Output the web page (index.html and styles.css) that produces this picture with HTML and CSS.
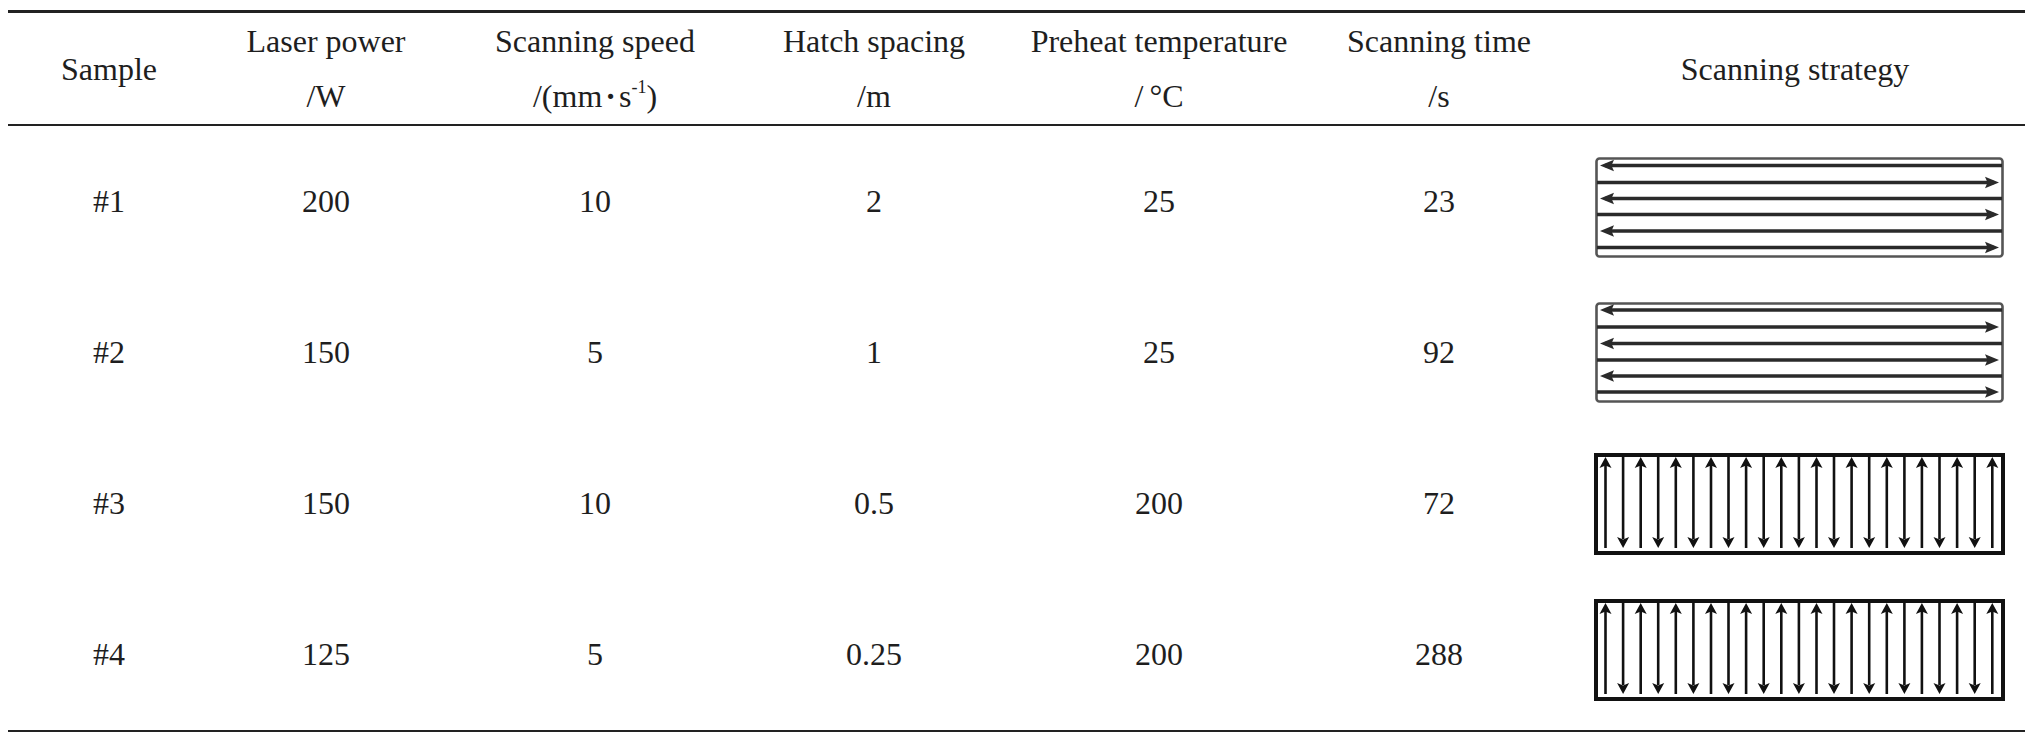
FILE: index.html
```html
<!DOCTYPE html>
<html lang="en">
<head>
<meta charset="utf-8">
<title>Scanning parameters</title>
<link rel="stylesheet" href="styles.css">
</head>
<body>
<div class="table">
  <div class="row head">
    <div class="cell">Sample</div>
    <div class="cell">Laser power<br>/W</div>
    <div class="cell">Scanning speed<br>/(mm<span class="dot">·</span>s<sup>-1</sup>)</div>
    <div class="cell">Hatch spacing<br>/m</div>
    <div class="cell">Preheat temperature<br><span class="deg">/ °C</span></div>
    <div class="cell time">Scanning time<br>/s</div>
    <div class="cell strat-head">Scanning strategy</div>
  </div>

  <div class="row body">
    <div class="cell">#1</div>
    <div class="cell">200</div>
    <div class="cell">10</div>
    <div class="cell">2</div>
    <div class="cell">25</div>
    <div class="cell time">23</div>
    <div class="cell strat shift-down">
      <svg class="hbox" width="409" height="101" viewBox="0 0 409 101">
        <defs>
          <g id="hl"><line x1="10" y1="0" x2="407" y2="0"/><path d="M5,0 L19,-5.8 L16.5,0 L19,5.8 Z"/></g>
          <g id="hr"><line x1="2" y1="0" x2="399" y2="0"/><path d="M404,0 L390,-5.8 L392.5,0 L390,5.8 Z"/></g>
        </defs>
        <rect class="frame" x="1.5" y="1.5" width="406" height="98" rx="3"/>
        <use href="#hl" y="8.5"/>
        <use href="#hr" y="25.5"/>
        <use href="#hl" y="41.5"/>
        <use href="#hr" y="57.5"/>
        <use href="#hl" y="74"/>
        <use href="#hr" y="90.5"/>
      </svg>
    </div>
  </div>

  <div class="row body">
    <div class="cell">#2</div>
    <div class="cell">150</div>
    <div class="cell">5</div>
    <div class="cell">1</div>
    <div class="cell">25</div>
    <div class="cell time">92</div>
    <div class="cell strat">
      <svg class="hbox" width="409" height="101" viewBox="0 0 409 101">
        <rect class="frame" x="1.5" y="1.5" width="406" height="98" rx="3"/>
        <use href="#hl" y="8"/>
        <use href="#hr" y="25"/>
        <use href="#hl" y="41.5"/>
        <use href="#hr" y="58"/>
        <use href="#hl" y="74"/>
        <use href="#hr" y="90"/>
      </svg>
    </div>
  </div>

  <div class="row body">
    <div class="cell">#3</div>
    <div class="cell">150</div>
    <div class="cell">10</div>
    <div class="cell">0.5</div>
    <div class="cell">200</div>
    <div class="cell time">72</div>
    <div class="cell strat">
      <svg class="vbox" width="411" height="102" viewBox="0 0 411 102">
        <defs>
          <g id="up"><line x1="0" y1="12" x2="0" y2="95"/><path d="M0,4 L-6,15 L0,12.5 L6,15 Z"/></g>
          <g id="dn"><line x1="0" y1="4" x2="0" y2="86"/><path d="M0,95 L-6,84 L0,86.5 L6,84 Z"/></g>
        </defs>
        <rect class="frame" x="2" y="2" width="407" height="98"/>
        <use href="#up" x="11.5"/><use href="#dn" x="29.1"/>
        <use href="#up" x="46.7"/><use href="#dn" x="64.2"/>
        <use href="#up" x="81.8"/><use href="#dn" x="99.4"/>
        <use href="#up" x="117"/><use href="#dn" x="134.5"/>
        <use href="#up" x="152.1"/><use href="#dn" x="169.7"/>
        <use href="#up" x="187.3"/><use href="#dn" x="204.9"/>
        <use href="#up" x="222.5"/><use href="#dn" x="240"/>
        <use href="#up" x="257.6"/><use href="#dn" x="275.2"/>
        <use href="#up" x="292.8"/><use href="#dn" x="310.4"/>
        <use href="#up" x="327.9"/><use href="#dn" x="345.5"/>
        <use href="#up" x="363.1"/><use href="#dn" x="380.7"/>
        <use href="#up" x="398.3"/>
      </svg>
    </div>
  </div>

  <div class="row body">
    <div class="cell">#4</div>
    <div class="cell">125</div>
    <div class="cell">5</div>
    <div class="cell">0.25</div>
    <div class="cell">200</div>
    <div class="cell time">288</div>
    <div class="cell strat shift-up">
      <svg class="vbox" width="411" height="102" viewBox="0 0 411 102">
        <rect class="frame" x="2" y="2" width="407" height="98"/>
        <use href="#up" x="11.5"/><use href="#dn" x="29.1"/>
        <use href="#up" x="46.7"/><use href="#dn" x="64.2"/>
        <use href="#up" x="81.8"/><use href="#dn" x="99.4"/>
        <use href="#up" x="117"/><use href="#dn" x="134.5"/>
        <use href="#up" x="152.1"/><use href="#dn" x="169.7"/>
        <use href="#up" x="187.3"/><use href="#dn" x="204.9"/>
        <use href="#up" x="222.5"/><use href="#dn" x="240"/>
        <use href="#up" x="257.6"/><use href="#dn" x="275.2"/>
        <use href="#up" x="292.8"/><use href="#dn" x="310.4"/>
        <use href="#up" x="327.9"/><use href="#dn" x="345.5"/>
        <use href="#up" x="363.1"/><use href="#dn" x="380.7"/>
        <use href="#up" x="398.3"/>
      </svg>
    </div>
  </div>
</div>
</body>
</html>
```

FILE: styles.css
```css
html, body {
  margin: 0;
  padding: 0;
  background: #ffffff;
}

body {
  font-family: "Liberation Serif", "DejaVu Serif", "Noto Sans CJK SC", serif;
  color: #1e1e1e;
}

.table {
  width: 2017px;
  margin: 10px 0 0 8px;
  border-top: 3px solid #222222;
  border-bottom: 2px solid #222222;
}

.row {
  display: grid;
  grid-template-columns: 202px 232px 306px 252px 318px 255px 452px;
  grid-template-rows: 100%;
  align-items: center;
}

.cell {
  text-align: center;
  font-size: 32px;
  white-space: nowrap;
}

.head {
  height: 111px;
  border-bottom: 2px solid #222222;
}

.head .cell {
  line-height: 55px;
  padding-top: 1px;
}

.head .strat-head {
  padding-right: 8px;
}

.body {
  height: 151px;
}

.body .cell {
  line-height: 1;
  padding-bottom: 2px;
}

.time {
  padding-right: 13px;
}

.body .strat {
  display: flex;
  justify-content: center;
  align-items: center;
  padding: 0 0 0 0;
}

.body .shift-down {
  padding-top: 12px;
}

.body .shift-up {
  padding-bottom: 10px;
}

.dot {
  font-weight: bold;
  margin: 0 3px;
}

.deg {
  word-spacing: -2px;
}

sup {
  font-size: 18px;
  line-height: 0;
  vertical-align: 14px;
}

svg {
  display: block;
}

.hbox .frame {
  fill: none;
  stroke: #555555;
  stroke-width: 2.6;
}

.hbox line {
  stroke: #2a2a2a;
  stroke-width: 3.4;
}

.hbox path {
  fill: #2a2a2a;
}

.vbox .frame {
  fill: none;
  stroke: #111111;
  stroke-width: 4;
}

.vbox line {
  stroke: #111111;
  stroke-width: 2.6;
}

.vbox path {
  fill: #111111;
}
```
